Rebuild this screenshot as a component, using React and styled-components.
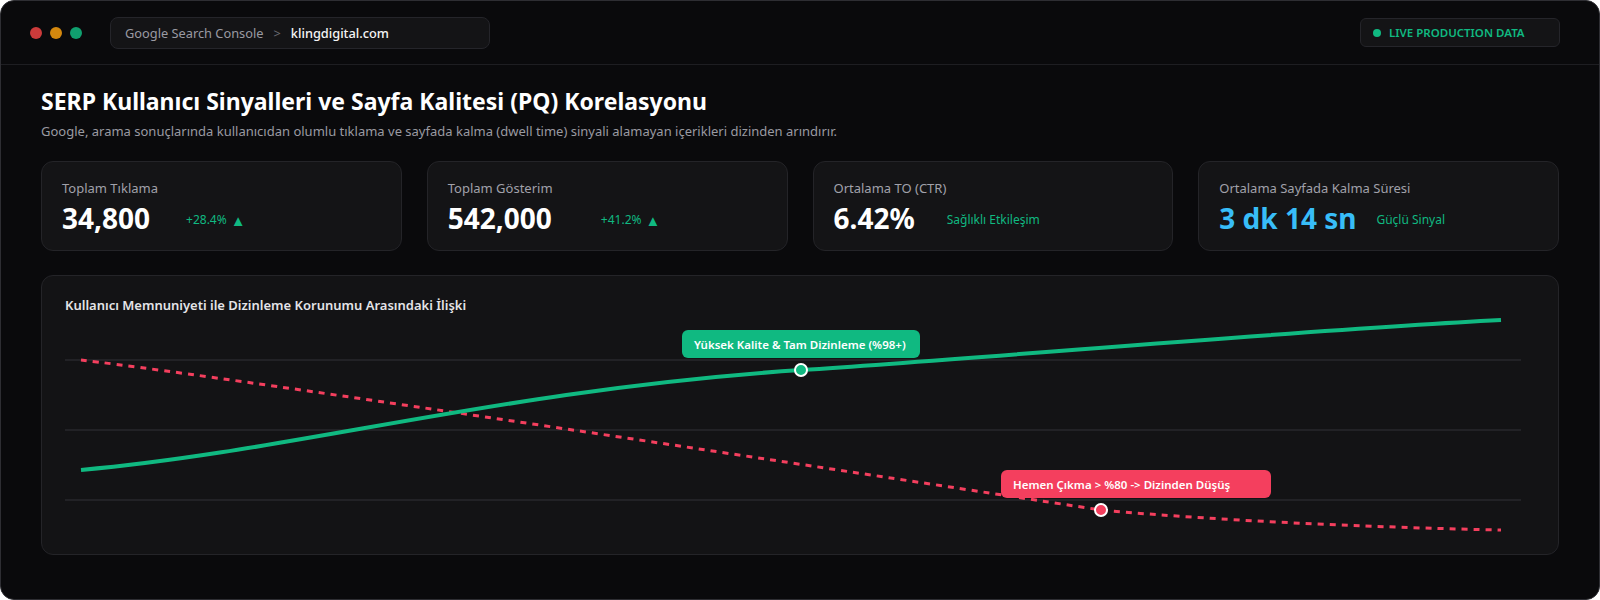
import React from "react";
import styled, { createGlobalStyle } from "styled-components";

const Global = createGlobalStyle`
  * { box-sizing: border-box; }
  html, body { margin: 0; padding: 0; background: #ffffff; }
  body { font-family: "Noto Sans", "Open Sans", sans-serif; }
`;

const Window = styled.div`
  width: 1600px;
  height: 600px;
  background: #0a0a0c;
  border: 1px solid #2e2e33;
  border-radius: 14px;
  overflow: hidden;
  display: flex;
  flex-direction: column;
`;

const TopBar = styled.header`
  height: 64px;
  flex: none;
  display: flex;
  align-items: center;
  padding: 0 39px 0 29px;
  border-bottom: 1px solid #1e1e22;
`;

const Lights = styled.div`
  display: flex;
  gap: 8px;
  margin-right: 28px;
`;

const Light = styled.span`
  width: 12px;
  height: 12px;
  border-radius: 50%;
  background: ${(p) => p.$color};
`;

const Crumbs = styled.div`
  width: 380px;
  height: 32px;
  display: flex;
  align-items: center;
  padding: 0 14px;
  background: #141416;
  border: 1px solid #25252a;
  border-radius: 8px;
  font-size: 12.8px;
  color: #9a9aa2;
`;

const Sep = styled.span`
  margin: 0 10px 0 10px;
  color: #6b6b73;
`;

const Domain = styled.span`
  color: #f4f4f5;
  font-weight: 500;
`;

const Spacer = styled.div`
  flex: 1;
`;

const LiveBadge = styled.div`
  width: 200px;
  height: 29px;
  display: flex;
  align-items: center;
  gap: 8px;
  padding: 0 12px;
  background: #141416;
  border: 1px solid #25252a;
  border-radius: 6px;
  color: #10b981;
  font-size: 11.5px;
  font-weight: 600;
`;

const Dot = styled.span`
  width: 8px;
  height: 8px;
  border-radius: 50%;
  background: #10b981;
`;

const Main = styled.main`
  flex: 1;
  padding: 21px 40px 0 40px;
  display: flex;
  flex-direction: column;
`;

const Title = styled.h1`
  margin: 0;
  font-size: 23px;
  line-height: 30px;
  font-weight: 700;
  color: #ffffff;
`;

const Subtitle = styled.p`
  margin: 6px 0 0;
  font-size: 13px;
  line-height: 18px;
  color: #9a9aa2;
`;

const Stats = styled.div`
  margin-top: 21px;
  display: grid;
  grid-template-columns: repeat(4, 1fr);
  gap: 25px;
`;

const Card = styled.div`
  height: 90px;
  background: #141416;
  border: 1px solid #242428;
  border-radius: 12px;
  padding: 17px 20px 0;
`;

const Label = styled.div`
  font-size: 13px;
  line-height: 18px;
  color: #a1a1aa;
`;

const ValueRow = styled.div`
  margin-top: 3px;
  display: flex;
  align-items: center;
  gap: ${(p) => p.$gap}px;
`;

const Value = styled.div`
  font-size: 28px;
  line-height: 36px;
  font-weight: 700;
  color: ${(p) => p.$color || "#ffffff"};
`;

const Delta = styled.div`
  display: flex;
  align-items: center;
  gap: 4px;
  font-size: 12px;
  line-height: 16px;
  margin-top: 3px;
  color: #10b981;
`;

const Arrow = styled.span`
  font-size: 15px;
  line-height: 14px;
`;

const ChartCard = styled.section`
  margin-top: 24px;
  height: 280px;
  background: #131315;
  border: 1px solid #242428;
  border-radius: 12px;
  padding: 19px 40px 24px 23px;
  display: flex;
  flex-direction: column;
`;

const ChartTitle = styled.h2`
  margin: 0;
  font-size: 13px;
  line-height: 20px;
  font-weight: 600;
  color: #e4e4e7;
`;

const Plot = styled.div`
  position: relative;
  margin-top: 15px;
  width: 1456px;
  height: 200px;
`;

const PlotSvg = styled.svg`
  display: block;
  overflow: visible;
`;

const Tip = styled.div`
  position: absolute;
  width: ${(p) => p.$w}px;
  height: 28px;
  display: flex;
  align-items: center;
  padding: 0 12px;
  border-radius: 6px;
  background: ${(p) => p.$bg};
  color: #ffffff;
  font-size: 11.5px;
  font-weight: 600;
  white-space: nowrap;
`;

const stats = [
  { label: "Toplam Tıklama", value: "34,800", delta: "+28.4%", up: true, gap: 36 },
  { label: "Toplam Gösterim", value: "542,000", delta: "+41.2%", up: true, gap: 49 },
  { label: "Ortalama TO (CTR)", value: "6.42%", delta: "Sağlıklı Etkileşim", gap: 32 },
  { label: "Ortalama Sayfada Kalma Süresi", value: "3 dk 14 sn", delta: "Güçlü Sinyal", gap: 20, color: "#38bdf8" },
];

export default function App() {
  return (
    <>
      <Global />
      <Window>
        <TopBar>
          <Lights>
            <Light $color="#cc3b3b" />
            <Light $color="#d4880e" />
            <Light $color="#10a06f" />
          </Lights>
          <Crumbs>
            <span>Google Search Console</span>
            <Sep>&gt;</Sep>
            <Domain>klingdigital.com</Domain>
          </Crumbs>
          <Spacer />
          <LiveBadge>
            <Dot />
            LIVE PRODUCTION DATA
          </LiveBadge>
        </TopBar>
        <Main>
          <Title>SERP Kullanıcı Sinyalleri ve Sayfa Kalitesi (PQ) Korelasyonu</Title>
          <Subtitle>
            Google, arama sonuçlarında kullanıcıdan olumlu tıklama ve sayfada kalma (dwell time) sinyali alamayan içerikleri dizinden arındırır.
          </Subtitle>
          <Stats>
            {stats.map((s) => (
              <Card key={s.label}>
                <Label>{s.label}</Label>
                <ValueRow $gap={s.gap}>
                  <Value $color={s.color}>{s.value}</Value>
                  <Delta>
                    {s.delta}
                    {s.up && <Arrow>▲</Arrow>}
                  </Delta>
                </ValueRow>
              </Card>
            ))}
          </Stats>
          <ChartCard>
            <ChartTitle>Kullanıcı Memnuniyeti ile Dizinleme Korunumu Arasındaki İlişki</ChartTitle>
            <Plot>
              <PlotSvg width="1456" height="200" viewBox="64 330 1456 200">
                <g stroke="#222226" strokeWidth="2">
                  <line x1="64" y1="360" x2="1520" y2="360" />
                  <line x1="64" y1="430" x2="1520" y2="430" />
                  <line x1="64" y1="500" x2="1520" y2="500" />
                </g>
                <path
                  d="M80 360 C 250 380, 850 472, 1100 510 C 1230 522, 1400 528, 1500 530"
                  fill="none"
                  stroke="#f43f5e"
                  strokeWidth="3"
                  strokeDasharray="6 6"
                />
                <path
                  d="M80 470 C 300 450, 500 390, 800 370 C 1000 357, 1300 330, 1500 320"
                  fill="none"
                  stroke="#10b981"
                  strokeWidth="4"
                />
                <circle cx="800" cy="370" r="6" fill="#10b981" stroke="#ffffff" strokeWidth="2" />
                <circle cx="1100" cy="510" r="6" fill="#f43f5e" stroke="#ffffff" strokeWidth="2" />
              </PlotSvg>
              <Tip $bg="#10b981" $w={238} style={{ left: 617, top: 0 }}>
                Yüksek Kalite &amp; Tam Dizinleme (%98+)
              </Tip>
              <Tip $bg="#f43f5e" $w={270} style={{ left: 936, top: 140 }}>
                Hemen Çıkma &gt; %80 -&gt; Dizinden Düşüş
              </Tip>
            </Plot>
          </ChartCard>
        </Main>
      </Window>
    </>
  );
}
